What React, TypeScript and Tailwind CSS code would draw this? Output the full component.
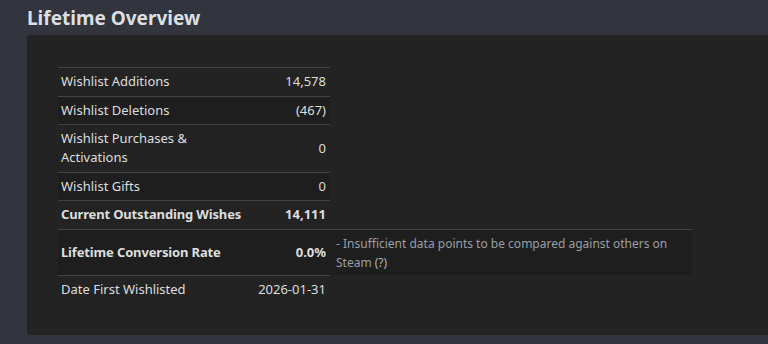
const ROWS = [
  { label: 'Wishlist Additions', value: '14,578' },
  { label: 'Wishlist Deletions', value: '(467)' },
  { label: 'Wishlist Purchases & Activations', value: '0' },
  { label: 'Wishlist Gifts', value: '0' },
  { label: 'Current Outstanding Wishes', value: '14,111', bold: true },
  { label: 'Lifetime Conversion Rate', value: '0.0%', bold: true, note: true },
  { label: 'Date First Wishlisted', value: '2026-01-31' },
]

function Row({ row, i }: { row: typeof ROWS[number] & { bold?: boolean; note?: boolean }; i: number }) {
  const odd = i % 2 === 1
  return (
    <div
      className={`flex border-t border-[#444444] ${odd ? 'bg-[#1e1e1e]' : ''} ${
        row.note ? 'w-[634px]' : 'w-[272px]'
      }`}
    >
      <div
        className={`w-[198px] shrink-0 pl-[3px] pr-[2px] pt-[4px] pb-[4.5px] flex items-center ${
          row.bold ? 'font-bold tracking-[-0.15px]' : ''
        }`}
      >
        {row.label}
      </div>
      <div className={`w-[74px] shrink-0 pr-[4px] flex items-center justify-end ${row.bold ? 'font-bold' : ''}`}>
        {row.value}
      </div>
      {row.note && (
        <div className="flex-1 flex items-center pt-[4px] pb-[3.5px] pl-[6px] pr-6 text-[12px] leading-[19px] text-[#9a9fa4]">
          <p>
            - Insufficient data points to be compared against others on Steam <span className="text-[#aeb2b6]">(?)</span>
          </p>
        </div>
      )}
    </div>
  )
}

export default function App() {
  return (
    <div className="min-h-[344px] bg-[#32353d] pb-[9px] font-['Noto_Sans',sans-serif]">
      <div className="h-[35px] pl-[27px] pt-[5px] text-[19px] leading-[26px] font-bold text-[#dcdfe2]">
        Lifetime Overview
      </div>
      <div className="ml-[27px] h-[300px] rounded-l-[3px] bg-[#232323] pl-[31px] pt-[32px] text-[13px] leading-[19px] text-[#dcdedf]">
        <div className="flex flex-col items-start">
          {ROWS.map((row, i) => (
            <Row key={row.label} row={row} i={i} />
          ))}
        </div>
      </div>
    </div>
  )
}
